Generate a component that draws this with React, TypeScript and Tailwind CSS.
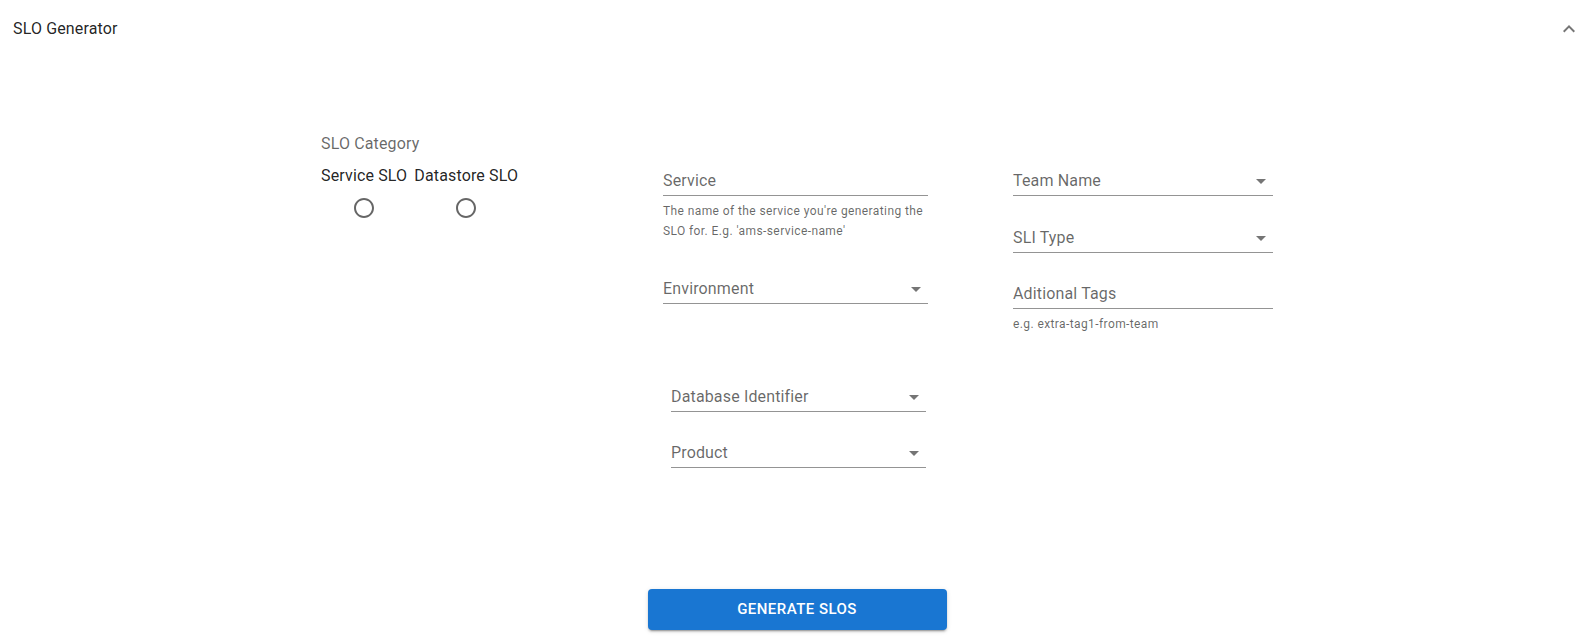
import React, { useState } from 'react';

const ArrowDrop = () => (
  <svg viewBox="0 0 24 24" className="w-6 h-6 shrink-0" fill="rgba(0,0,0,0.54)">
    <path d="M7 10l5 5 5-5z" />
  </svg>
);

const RadioIcon = ({ checked }: { checked: boolean }) => (
  <svg viewBox="0 0 24 24" className="w-6 h-6" fill={checked ? '#1976d2' : 'rgba(0,0,0,0.6)'}>
    <path d="M12 2C6.48 2 2 6.48 2 12s4.48 10 10 10 10-4.48 10-10S17.52 2 12 2zm0 18c-4.42 0-8-3.58-8-8s3.58-8 8-8 8 3.58 8 8-3.58 8-8 8z" />
    {checked && <circle cx="12" cy="12" r="5" />}
  </svg>
);

interface FieldProps {
  label: string;
  select?: boolean;
  className?: string;
}

const Field: React.FC<FieldProps> = ({ label, select, className = '' }) => (
  <div className={`flex items-center justify-between h-[27px] pb-[2px] border-b border-[#949494] ${className}`}>
    <span className="text-base leading-6 text-[rgba(0,0,0,0.6)] tracking-[0.15px]">{label}</span>
    {select && <ArrowDrop />}
  </div>
);

const Helper: React.FC<{ children: React.ReactNode }> = ({ children }) => (
  <p className="mt-[5px] text-xs leading-5 tracking-[0.4px] text-[rgba(0,0,0,0.6)]">{children}</p>
);

export default function App() {
  const [category, setCategory] = useState<string | null>(null);

  return (
    <div className="min-h-screen bg-white font-['Roboto',sans-serif] text-[rgba(0,0,0,0.87)]">
      {/* Accordion header */}
      <div className="h-[58px] flex items-center justify-between px-[13px]">
        <span className="text-base leading-6 tracking-[0.15px]">SLO Generator</span>
        <svg viewBox="0 0 24 24" className="w-6 h-6" fill="rgba(0,0,0,0.54)">
          <path d="M12 8l-6 6 1.41 1.41L12 10.83l4.59 4.58L18 14z" />
        </svg>
      </div>

      <div className="mx-auto w-[952px] pt-[74px] flex">
        {/* SLO Category */}
        <div className="w-[342px]">
          <p className="text-base leading-6 text-[rgba(0,0,0,0.6)] tracking-[0.15px]">SLO Category</p>
          <div className="flex gap-[7px] mt-2">
            {['Service SLO', 'Datastore SLO'].map((c) => (
              <button key={c} onClick={() => setCategory(c)} className="flex flex-col items-center">
                <span className="text-base leading-6 tracking-[0.15px]">{c}</span>
                <span className="mt-2">
                  <RadioIcon checked={category === c} />
                </span>
              </button>
            ))}
          </div>
        </div>

        {/* Middle column */}
        <div className="w-[265px] pt-[37px]">
          <Field label="Service" />
          <Helper>
            The name of the service you're generating the
            <br />
            SLO for. E.g. 'ams-service-name'
          </Helper>
          <Field label="Environment" select className="mt-[36px]" />

          <div className="ml-2 mr-[2px] mt-[81px]">
            <Field label="Database Identifier" select />
            <Field label="Product" select className="mt-[29px]" />
          </div>
        </div>

        {/* Right column */}
        <div className="w-[260px] ml-[85px] pt-[37px]">
          <Field label="Team Name" select />
          <Field label="SLI Type" select className="mt-[30px]" />
          <Field label="Aditional Tags" className="mt-[29px]" />
          <Helper>e.g. extra-tag1-from-team</Helper>
        </div>
      </div>

      <div className="flex justify-center mt-[121px]">
        <button className="w-[299px] h-[41px] rounded bg-[#1976d2] text-white text-[15px] font-medium tracking-[0.46px] uppercase shadow-[0px_3px_1px_-2px_rgba(0,0,0,0.2),0px_2px_2px_0px_rgba(0,0,0,0.14),0px_1px_5px_0px_rgba(0,0,0,0.12)]">
          Generate SLOs
        </button>
      </div>
    </div>
  );
}
